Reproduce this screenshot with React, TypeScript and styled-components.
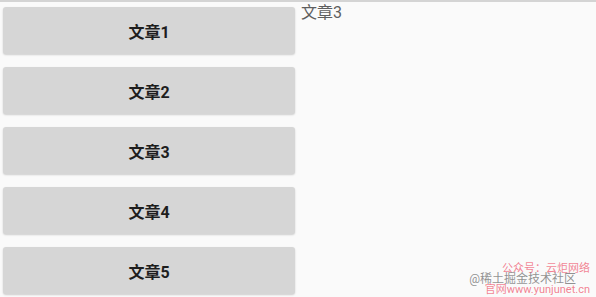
import React from "react";
import styled, { createGlobalStyle } from "styled-components";

const Global = createGlobalStyle`
  html, body { margin: 0; padding: 0; }
  body {
    background: #fafafa;
    font-family: Roboto, "Noto Sans CJK SC", sans-serif;
    width: 596px;
    height: 297px;
    overflow: hidden;
  }
`;

const Screen = styled.div`
  position: relative;
  width: 596px;
  height: 297px;
  box-sizing: border-box;
  border-top: 2px solid #d4d4d4;
  display: flex;
  align-items: flex-start;
`;

const List = styled.div`
  display: flex;
  flex-direction: column;
  gap: 13px;
  padding: 5px 0 0 3px;
  width: 292px;
`;

const Button = styled.button`
  height: 47px;
  border: none;
  border-radius: 3px;
  background: #d6d6d6;
  box-shadow: 0 1px 2px rgba(0, 0, 0, 0.18);
  font-family: Roboto, "Noto Sans CJK SC", sans-serif;
  font-weight: 700;
  font-size: 16px;
  color: #1e1e1e;
  display: flex;
  align-items: center;
  justify-content: center;
  padding: 0;
`;

const Selected = styled.div`
  margin: 2px 0 0 6px;
  font-size: 16px;
  line-height: 18px;
  color: #5e5e5e;
`;

const Watermark = styled.div`
  position: absolute;
  right: 6px;
  bottom: 2px;
  display: flex;
  flex-direction: column;
  align-items: flex-end;
`;

const Pink = styled.span<{ $size: number }>`
  font-size: ${(p) => p.$size}px;
  line-height: 10px;
  color: rgba(240, 100, 120, 0.8);
`;

const Gray = styled.span`
  font-size: 12px;
  line-height: 11px;
  color: rgba(110, 110, 110, 0.75);
  margin-right: 14px;
`;

export default function App() {
  const items = ["文章1", "文章2", "文章3", "文章4", "文章5"];
  return (
    <>
      <Global />
      <Screen>
        <List>
          {items.map((t) => (
            <Button key={t}>{t}</Button>
          ))}
        </List>
        <Selected>文章3</Selected>
        <Watermark>
          <Pink $size={11}>公众号：云炬网络</Pink>
          <Gray>@稀土掘金技术社区</Gray>
          <Pink $size={11}>官网www.yunjunet.cn</Pink>
        </Watermark>
      </Screen>
    </>
  );
}
